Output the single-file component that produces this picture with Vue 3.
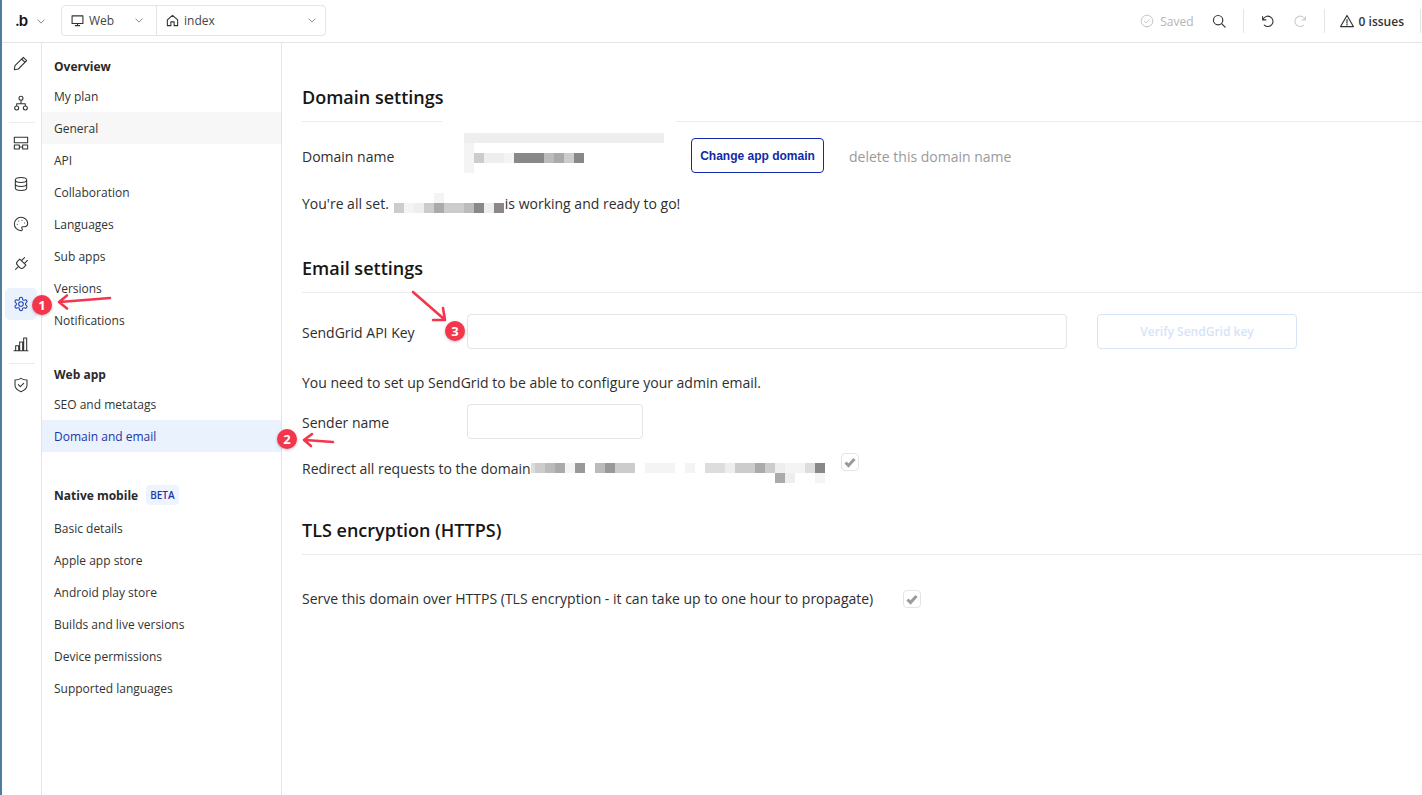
<script setup>
const railIcons = [
  { name: 'design', d: 'M15.500 3.500l5 5L8 21l-6 1 1-6zM13 6l5 5' },
  { name: 'workflow', d: 'M12 8a3 3 0 1 0 0-6 3 3 0 0 0 0 6zM12 8v5M5.500 16.500V13h13v3.500M5.500 22.500a3 3 0 1 0 0-6 3 3 0 0 0 0 6zM18.500 22.500a3 3 0 1 0 0-6 3 3 0 0 0 0 6z', sep: true },
  { name: 'page', d: 'M2 3.500h20v8H2zM2 15h7.500v6H2zM14.500 15H22v6h-7.500zM9.500 18h5' },
  { name: 'data', nudge: true, d: 'M3.500 6c0-5 17-5 17 0v12c0 5-17 5-17 0zM3.500 6c0 5 17 5 17 0M3.500 12c0 5 17 5 17 0' },
  { name: 'styles', d: 'M12 22a1 1 0 0 1 0-20 10 9 0 0 1 10 9 5 5 0 0 1-5 5h-2.250a1.750 1.750 0 0 0-1.400 2.800l.3.4a1.750 1.750 0 0 1-1.400 2.800zM13.500 6.500h.1M17.500 10.500h.1M6.500 12.500h.1M8.500 7.500h.1' },
  { name: 'plugins', rotate: 'rotate(45 12 12)', d: 'M12 23.500V17M9 8V1.500M15 8V1.500M18.500 8v5a4 4 0 0 1-4 4h-5a4 4 0 0 1-4-4V8z' },
  { name: 'settings', active: true, d: 'M12.220 2h-.44a2 2 0 0 0-2 2v.18a2 2 0 0 1-1 1.730l-.43.25a2 2 0 0 1-2 0l-.15-.08a2 2 0 0 0-2.730.73l-.22.38a2 2 0 0 0 .73 2.730l.15.1a2 2 0 0 1 1 1.720v.51a2 2 0 0 1-1 1.740l-.15.09a2 2 0 0 0-.73 2.730l.22.38a2 2 0 0 0 2.730.73l.15-.08a2 2 0 0 1 2 0l.43.25a2 2 0 0 1 1 1.730V20a2 2 0 0 0 2 2h.44a2 2 0 0 0 2-2v-.18a2 2 0 0 1 1-1.730l.43-.25a2 2 0 0 1 2 0l.15.08a2 2 0 0 0 2.730-.73l.22-.39a2 2 0 0 0-.73-2.730l-.15-.08a2 2 0 0 1-1-1.740v-.5a2 2 0 0 1 1-1.740l.15-.09a2 2 0 0 0 .73-2.730l-.22-.38a2 2 0 0 0-2.730-.73l-.15.08a2 2 0 0 1-2 0l-.43-.25a2 2 0 0 1-1-1.730V4a2 2 0 0 0-2-2zM12 15.500a3.500 3.500 0 1 0 0-7 3.500 3.500 0 0 0 0 7z' },
  { name: 'logs', d: 'M1.500 22h21M4 22v-7.500h4.500V22M10 22V9h4.500v13M16 22V3h4.500v19', sep: true },
  { name: 'security', nudge: true, d: 'M3 4.500c3.200 0 6.400-.6 9-2.500 2.600 1.900 5.800 2.500 9 2.500v8c0 4.700-4.200 7.800-9 9.500-4.800-1.700-9-4.800-9-9.500zM8 11.500l3 3 5-5' }
]

const menuGroups = [
  { title: 'Overview', items: ['My plan', 'General', 'API', 'Collaboration', 'Languages', 'Sub apps', 'Versions', 'Notifications'] },
  { title: 'Web app', items: ['SEO and metatags', 'Domain and email'] },
  { title: 'Native mobile', beta: true, items: ['Basic details', 'Apple app store', 'Android play store', 'Builds and live versions', 'Device permissions', 'Supported languages'] }
]

// each char is one 10px block, a dot is empty
const blurDomain = ['eeeeeeeeeeeeeeeeeeee', 'f', 'fceef888bac8', 'f']
const blurHost = ['....f', 'cfecaccb8e8']
const blurRedirect = ['cbaf9.b9cc.fff.f.ddeccaceffd8', '........................ae..f']

const shade = (ch) => (ch === 'f' ? '#f4f4f4' : '#' + ch.repeat(6))

const cellsOf = (rows) => {
  const cells = []
  rows.forEach((row, y) => {
    row.split('').forEach((ch, x) => {
      if (ch !== '.') cells.push({ key: x + '-' + y, x: x + 1, y: y + 1, color: shade(ch) })
    })
  })
  return cells
}

const cellStyle = (c) => ({ gridColumn: c.x, gridRow: c.y, background: c.color })
</script>

<template>
  <div class="editor">
    <!-- top bar -->
    <header class="topbar">
      <div class="logo">.b</div>
      <svg class="chev" viewBox="0 0 10 6"><path d="M1 1l4 4 4-4" /></svg>
      <div class="selector">
        <div class="sel sel-web">
          <svg class="ico" viewBox="0 0 24 24"><path d="M2 3.500h20v14H2zM8 21.500h8M12 17.500v4" /></svg>
          <span>Web</span>
          <svg class="chev" viewBox="0 0 10 6"><path d="M1 1l4 4 4-4" /></svg>
        </div>
        <div class="sel sel-page">
          <svg class="ico" viewBox="0 0 24 24"><path d="M2.500 11L12 2.500 21.500 11v10.500h-6.500v-7H9v7H2.500z" /></svg>
          <span>index</span>
          <svg class="chev" viewBox="0 0 10 6"><path d="M1 1l4 4 4-4" /></svg>
        </div>
      </div>

      <div class="top-right">
        <svg class="ico ico-saved" viewBox="0 0 24 24"><path d="M12 22a10 10 0 1 0 0-20 10 10 0 0 0 0 20zM7.500 12.500l3 3 6-6" /></svg>
        <span class="saved">Saved</span>
        <svg class="ico ico-search" viewBox="0 0 24 24"><path d="M10.500 18.500a8 8 0 1 0 0-16 8 8 0 0 0 0 16zM16.500 16.500l6 6" /></svg>
        <i class="vline vline-a"></i>
        <svg class="ico ico-undo" viewBox="0 0 24 24"><path d="M3 3v6h6M3.500 9A9.500 9.500 0 1 1 6 18.500" /></svg>
        <svg class="ico ico-redo" viewBox="0 0 24 24"><path d="M21 3v6h-6M20.500 9A9.500 9.500 0 1 0 18 18.500" /></svg>
        <i class="vline vline-b"></i>
        <svg class="ico ico-warn" viewBox="0 0 24 24"><path d="M12 2.500L23 21.500H1zM12 9.500v6M12 17.500v1.500" /></svg>
        <span class="issues">0 issues</span>
        <i class="vline vline-c"></i>
      </div>
    </header>

    <div class="body">
      <!-- icon rail -->
      <nav class="rail">
        <div
          v-for="icon in railIcons"
          :key="icon.name"
          class="rail-item"
          :class="{ sep: icon.sep, active: icon.active, nudge: icon.nudge }"
        >
          <svg class="rail-ico" viewBox="0 0 24 24"><path :d="icon.d" :transform="icon.rotate" /></svg>
        </div>
      </nav>

      <!-- settings menu -->
      <aside class="menu">
        <div v-for="group in menuGroups" :key="group.title" class="group" :class="{ 'group-beta': group.beta }">
          <div class="group-head">
            <span>{{ group.title }}</span>
            <span v-if="group.beta" class="beta">BETA</span>
          </div>
          <div
            v-for="item in group.items"
            :key="item"
            class="menu-item"
            :class="{ hover: item === 'General', current: item === 'Domain and email' }"
          >{{ item }}</div>
        </div>
      </aside>

      <!-- content -->
      <main class="content">
        <h2 class="section-title first">
          Domain settings
          <i class="line-mask"></i>
        </h2>
        <div class="row domain-row">
          <span class="label domain-label">Domain name</span>
          <div class="blur blur-domain">
            <i v-for="c in cellsOf(blurDomain)" :key="c.key" :style="cellStyle(c)"></i>
          </div>
          <button class="btn-change">Change app domain</button>
          <span class="delete">delete this domain name</span>
        </div>
        <div class="row status-row">
          <span>You're all set.</span>
          <div class="blur blur-host">
            <i v-for="c in cellsOf(blurHost)" :key="c.key" :style="cellStyle(c)"></i>
          </div>
          <span>is working and ready to go!</span>
        </div>

        <h2 class="section-title email">Email settings</h2>
        <div class="row key-row">
          <span class="label">SendGrid API Key</span>
          <input class="field field-key" type="text" />
          <button class="btn-verify">Verify SendGrid key</button>
        </div>
        <p class="note">You need to set up SendGrid to be able to configure your admin email.</p>
        <div class="row sender-row">
          <span class="label">Sender name</span>
          <input class="field field-sender" type="text" />
        </div>
        <div class="row redirect-row">
          <span>Redirect all requests to the domain</span>
          <div class="blur blur-redirect">
            <i v-for="c in cellsOf(blurRedirect)" :key="c.key" :style="cellStyle(c)"></i>
          </div>
          <span class="check check-redirect">
            <svg viewBox="0 0 14 14"><path d="M2.500 7.500l3 3 6-6.500" /></svg>
          </span>
        </div>

        <h2 class="section-title tls">TLS encryption (HTTPS)</h2>
        <div class="row https-row">
          <span>Serve this domain over HTTPS (TLS encryption - it can take up to one hour to propagate)</span>
          <span class="check check-https">
            <svg viewBox="0 0 14 14"><path d="M2.500 7.500l3 3 6-6.500" /></svg>
          </span>
        </div>
      </main>
    </div>

    <!-- annotations drawn on top of the screenshot -->
    <svg class="arrows" width="1422" height="795" viewBox="0 0 1422 795">
      <path d="M110 298L60 302M67 295.500L59 302l8 6.500" />
      <path d="M333 442L305 440M312 434L304 440l7 6" />
      <path d="M413 292L444 319M443 308L445 320L433 320" />
    </svg>
    <span class="badge badge-1">1</span>
    <span class="badge badge-2">2</span>
    <span class="badge badge-3">3</span>
  </div>
</template>

<style>
html, body {
  margin: 0;
  overflow: hidden;
  background: #fff;
}
</style>

<style scoped>
.editor {
  position: relative;
  box-sizing: border-box;
  height: 100vh;
  display: flex;
  flex-direction: column;
  border-left: 2px solid #4f7d9b;
  font-family: "Open Sans", "Noto Sans", sans-serif;
  font-size: 14px;
  color: #2e2e2e;
}

svg path {
  fill: none;
  stroke-linecap: round;
  stroke-linejoin: round;
}

.topbar {
  flex: none;
  box-sizing: border-box;
  height: 43px;
  display: flex;
  align-items: center;
  border-bottom: 1px solid #e4e4e4;
}

.logo {
  width: 22px;
  margin-left: 13px;
  font-family: "Inter", sans-serif;
  font-size: 15px;
  font-weight: 600;
  line-height: 24px;
  color: #111;
  letter-spacing: -1px;
}

.chev {
  width: 8px;
  height: 5px;
  flex: none;
}

.chev path {
  stroke: #777;
  stroke-width: 1.100;
}

.selector {
  display: flex;
  box-sizing: border-box;
  width: 265px;
  height: 31px;
  margin-left: 16px;
  margin-bottom: 1px;
  border: 1px solid #e4e4e4;
  border-radius: 4px;
  font-size: 12px;
  color: #444;
}

.sel {
  display: flex;
  align-items: center;
  height: 100%;
}

.sel-web {
  box-sizing: border-box;
  width: 95px;
  padding: 0 13px 0 9px;
  border-right: 1px solid #e4e4e4;
}

.sel-page {
  flex: 1;
  padding: 0 9px;
}

.sel .chev {
  margin-left: auto;
}

.sel span {
  margin-left: 5px;
}

.ico {
  width: 13px;
  height: 13px;
  flex: none;
}

.ico path {
  stroke: #333;
  stroke-width: 2;
}

.top-right {
  margin-left: auto;
  display: flex;
  align-items: center;
  height: 100%;
  padding-right: 1px;
  font-size: 12px;
}

.ico-saved {
  width: 14px;
  height: 14px;
}

.ico-saved path {
  stroke: #bbb;
  stroke-width: 1.400;
}

.saved {
  margin-left: 6px;
  color: #b4b4b4;
}

.ico-search {
  width: 14px;
  height: 14px;
  margin-left: 18px;
}

.vline {
  display: block;
  width: 1px;
  height: 24px;
  background: #e4e4e4;
}

.vline-a {
  margin-left: 17px;
}

.ico-undo {
  margin-left: 17px;
}

.ico-redo {
  margin-left: 20px;
}

.ico-redo path {
  stroke: #ccc;
}

.vline-b {
  margin-left: 17px;
}

.ico-warn {
  width: 14px;
  height: 14px;
  margin-left: 15px;
}

.issues {
  margin-left: 5px;
  font-weight: 600;
  color: #333;
}

.vline-c {
  margin-left: 16px;
}

.body {
  flex: 1;
  min-height: 0;
  display: flex;
}

.rail {
  flex: none;
  box-sizing: border-box;
  width: 40px;
  border-right: 1px solid #e4e4e4;
}

.rail-item {
  position: relative;
  height: 40px;
  display: flex;
  align-items: center;
  justify-content: center;
  padding-right: 1px;
}

.rail-item.nudge {
  margin-top: 1px;
}

.rail-item.sep::after {
  content: "";
  position: absolute;
  left: 7px;
  right: 6px;
  bottom: 0;
  height: 1px;
  background: #ececec;
}

.rail-item.active::before {
  content: "";
  position: absolute;
  left: 3px;
  top: 4px;
  width: 32px;
  height: 32px;
  border-radius: 5px;
  background: #eaf2fd;
}

.rail-ico {
  position: relative;
  width: 16px;
  height: 16px;
}

.rail-ico path {
  stroke: #333;
  stroke-width: 1.600;
}

.active .rail-ico path {
  stroke: #1a3fb0;
}

.menu {
  flex: none;
  box-sizing: border-box;
  width: 240px;
  padding-top: 7px;
  border-right: 1px solid #e4e4e4;
  font-size: 12px;
}

.group + .group {
  margin-top: 22px;
}

.group-beta.group {
  margin-top: 27px;
}

.group-head {
  box-sizing: border-box;
  height: 30px;
  padding: 2px 0 0 12px;
  display: flex;
  align-items: center;
  font-weight: 700;
  color: #2a2a2a;
}

.group-beta .group-head {
  height: 33px;
  padding: 0 0 1px 12px;
}

.beta {
  margin-left: 8px;
  height: 20px;
  padding: 0 4px;
  border-radius: 4px;
  background: #eef4fe;
  color: #1c36a5;
  font-size: 10px;
  font-weight: 600;
  line-height: 20px;
}

.menu-item {
  height: 32px;
  padding-left: 12px;
  line-height: 34px;
  color: #333;
}

.menu-item.hover {
  background: #f7f7f7;
}

.menu-item.current {
  background: #eaf2fd;
  color: #1a35a8;
}

.content {
  flex: 1;
  min-width: 0;
  padding: 41px 0 0 20px;
}

.section-title {
  position: relative;
  margin: 0;
  padding-bottom: 11px;
  border-bottom: 1px solid #ececec;
  font-size: 18px;
  font-weight: 600;
  line-height: 26px;
  color: #161616;
}

.line-mask {
  position: absolute;
  left: 140px;
  bottom: -1px;
  width: 234px;
  height: 1px;
  background: #fff;
}

.section-title.email {
  margin-top: 41px;
}

.section-title.tls {
  margin-top: 34px;
}

.row {
  display: flex;
  line-height: 20px;
}

.label {
  flex: none;
  width: 165px;
}

.domain-row {
  position: relative;
  height: 38px;
  margin-top: 16px;
  align-items: center;
}

.domain-label {
  width: 389px;
}

.blur {
  display: grid;
  grid-auto-columns: 10px;
  grid-auto-rows: 10px;
}

.blur-domain {
  position: absolute;
  left: 162px;
  top: -5px;
}

.btn-change {
  flex: none;
  align-self: flex-start;
  box-sizing: border-box;
  width: 133px;
  height: 35px;
  padding: 0;
  border: 1px solid #0f2ba6;
  border-radius: 4px;
  background: #fff;
  color: #0f2ba6;
  font-family: "Liberation Sans", Arial, sans-serif;
  font-size: 12px;
  font-weight: 700;
}

.delete {
  margin-left: 25px;
  color: #9a9a9a;
}

.status-row {
  height: 20px;
  margin-top: 18px;
}

.blur-host {
  margin: -1px 1px 0 5px;
}

.key-row {
  margin-top: 21px;
  align-items: center;
}

.key-row .label,
.sender-row .label {
  margin-top: 3px;
}

.field {
  box-sizing: border-box;
  height: 35px;
  padding: 0 10px;
  border: 1px solid #e4e4e4;
  border-radius: 4px;
  background: #fff;
}

.field-key {
  width: 600px;
}

.field-sender {
  width: 176px;
}

.btn-verify {
  box-sizing: border-box;
  width: 200px;
  height: 35px;
  margin-left: 30px;
  border: 1px solid #d6e4f8;
  border-radius: 4px;
  background: #fff;
  color: #d6e4f8;
  font-family: "Open Sans", sans-serif;
  font-size: 12px;
  font-weight: 600;
}

.note {
  margin: 24px 0 0;
  line-height: 20px;
}

.sender-row {
  margin-top: 11px;
  align-items: center;
}

.redirect-row {
  height: 24px;
  margin-top: 20px;
  align-items: flex-start;
}

.blur-redirect {
  margin-top: 4px;
  border-left: 4px solid #dddddd;
  height: 10px;
}

.check {
  flex: none;
  box-sizing: border-box;
  width: 18px;
  height: 18px;
  display: flex;
  align-items: center;
  justify-content: center;
  border: 1px solid #e4e4e4;
  border-radius: 4px;
  background: #fff;
}

.check svg {
  width: 14px;
  height: 14px;
}

.check path {
  stroke: #9a9a9a;
  stroke-width: 3;
  stroke-linecap: butt;
  stroke-linejoin: miter;
}

.check-redirect {
  margin: -6px 0 0 16px;
}

.https-row {
  height: 20px;
  margin-top: 34px;
}

.check-https {
  margin: 1px 0 0 30px;
}

.arrows {
  position: absolute;
  left: -2px;
  top: 0;
  pointer-events: none;
}

.arrows path {
  stroke: #f4364c;
  stroke-width: 2.600;
}

.badge {
  position: absolute;
  width: 20px;
  height: 20px;
  border-radius: 50%;
  background: #f4364c;
  box-shadow: 0 1px 3px rgba(0, 0, 0, 0.25);
  color: #fff;
  font-size: 13px;
  font-weight: 700;
  line-height: 20px;
  text-align: center;
}

.badge-1 {
  left: 30px;
  top: 295px;
}

.badge-2 {
  left: 275px;
  top: 429px;
}

.badge-3 {
  left: 443px;
  top: 321px;
}
</style>
